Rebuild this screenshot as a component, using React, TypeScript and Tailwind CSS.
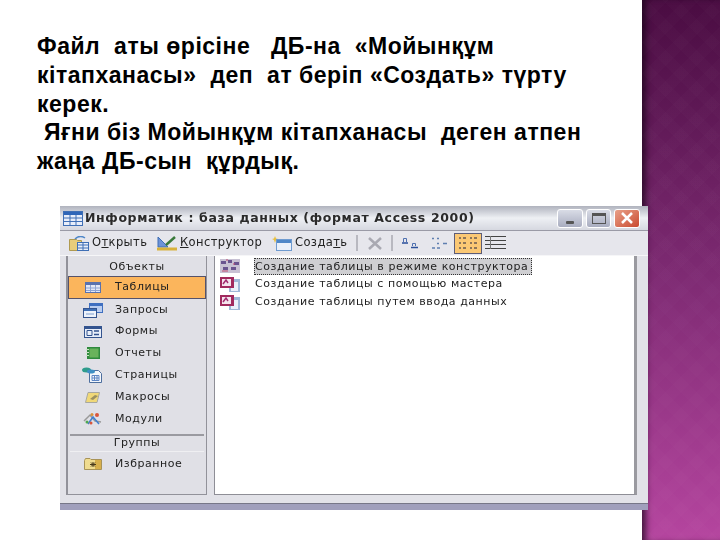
import React from "react";

const TableIcon = () => (
  <svg width="16" height="11" viewBox="0 0 16 11"><rect x="0" y="0" width="16" height="11" fill="#5a72ae" /><rect x="1" y="3" width="14" height="7" fill="#e4e8f6" /><path d="M1 6h14M1 8.500h14M5.500 3v7M10.500 3v7" stroke="#8ea4d4" /></svg>
);
const QueryIcon = () => (
  <svg width="20" height="15" viewBox="0 0 20 15"><rect x="6" y="0" width="14" height="10" fill="#3f6fc0" /><rect x="7" y="3" width="12" height="6" fill="#b9cdf0" /><rect x="0.500" y="5.500" width="13" height="9" fill="#eef3fb" stroke="#34548f" /><rect x="1" y="6" width="12" height="2" fill="#3f6fb5" /><path d="M3 11h8" stroke="#7f9fd0" /></svg>
);
const FormIcon = () => (
  <svg width="18" height="12" viewBox="0 0 18 12"><rect x="0" y="0" width="18" height="12" fill="#34548f" /><rect x="1" y="3" width="16" height="8" fill="#e8eef9" /><path d="M3 4.500h5v5H3z" fill="none" stroke="#34548f" /><path d="M10 5h5M10 8.500h5" stroke="#34548f" strokeWidth="1.500" /></svg>
);
const ReportIcon = () => (
  <svg width="14" height="12" viewBox="0 0 14 12"><rect x="1" y="0" width="13" height="12" fill="#2f8a3e" /><rect x="3.500" y="1.500" width="9" height="9" fill="#69b35c" /><path d="M0 2.500h3M0 5.500h3M0 8.500h3" stroke="#c9e4c4" /></svg>
);
const PageIcon = () => (
  <svg width="21" height="16" viewBox="0 0 21 16"><path d="M7.500 3.500h9l3 3v9h-12z" fill="#f4f7fc" stroke="#4e6f9e" /><path d="M10 8.500h7v5h-7zM10 11h7M12.500 8.500v5M15 8.500v5" fill="none" stroke="#5f86c4" /><ellipse cx="4.500" cy="3" rx="4.500" ry="2.500" fill="#2f9c8c" /><ellipse cx="9" cy="4.500" rx="4" ry="2" fill="#3f8fc4" /></svg>
);
const MacroIcon = () => (
  <svg width="15" height="11" viewBox="0 0 15 11"><path d="M3 0.500H14.500L12 10.500H0.500Z" fill="#f0d878" stroke="#a8a8a0" /><path d="M5 7l5-4 3 1-5 4z" fill="#9a9060" /></svg>
);
const ModuleIcon = () => (
  <svg width="20" height="14" viewBox="0 0 20 14"><path d="M1 9L7 3L12 9L18 10" fill="none" stroke="#999" strokeWidth="1.500" /><path d="M5 12L10 5L16 12" fill="none" stroke="#3f7fd0" strokeWidth="1.500" /><circle cx="14" cy="3" r="2" fill="#d8553c" /><circle cx="9" cy="2.500" r="1.500" fill="#d8923c" /><circle cx="4" cy="10" r="1.500" fill="#50a850" /><circle cx="8" cy="11" r="1.500" fill="#d8553c" /></svg>
);
const FolderIcon = () => (
  <svg width="18" height="12" viewBox="0 0 18 12"><path d="M0.500 2.500V11.500H17.500V1.500H7L6 0.500H1.500Z" fill="#f0dc90" stroke="#a89358" /><rect x="11" y="2" width="6" height="9" fill="#d8b04c" /><path d="M6 6.500h6M9 4v5M7 4.500l4 4M11 4.500l-4 4" stroke="#4a3a1a" /></svg>
);
const WizardIcon = ({ kind }: { kind: "design" | "wizard" }) =>
  kind === "design" ? (
    <svg width="20" height="14" viewBox="0 0 20 14"><rect width="20" height="14" fill="#c8c2d4" /><path d="M1 2h5v3H1zM8 1h4v3H8zM14 3h5v3h-5zM3 8h5v3H3zM11 8h5v3h-5z" fill="#6a5590" /><path d="M6 1h2M13 5h2M2 12h6" stroke="#c04a70" /></svg>
  ) : (
    <svg width="20" height="15" viewBox="0 0 20 15"><rect x="9" y="2" width="11" height="13" fill="#9fb8d8" /><rect x="11" y="5" width="7" height="9" fill="#eaf0fa" /><rect x="0" y="0" width="14" height="11" fill="#a12a5e" /><rect x="2" y="2" width="9" height="7" fill="#f4e4ee" /><path d="M3 7l3-4 2 3" fill="none" stroke="#a12a6e" strokeWidth="1.500" /></svg>
  );

const navItems: [string, React.ReactNode, string][] = [
  ["Запросы", <QueryIcon />, "h-[22px]"],
  ["Формы", <FormIcon />, "h-[21px]"],
  ["Отчеты", <ReportIcon />, "h-[22px]"],
  ["Страницы", <PageIcon />, "h-[22px]"],
  ["Макросы", <MacroIcon />, "h-[22px]"],
  ["Модули", <ModuleIcon />, "h-[22px]"],
];

const NavRow = ({ label, icon, h }: { label: string; icon: React.ReactNode; h: string }) => (
  <div className={`flex items-center ${h}`}>
    <div className="w-[47px] flex justify-center pl-[2px]">{icon}</div>
    <span>{label}</span>
  </div>
);

const Btn = ({ children, cls }: { children: React.ReactNode; cls: string }) => (
  <div className={`h-[19px] rounded-[3px] border border-white flex items-center justify-center ${cls}`}>{children}</div>
);

const Window = () => (
  <div className="absolute left-[60px] top-[206px] w-[588px] h-[304px] flex flex-col bg-[#e2e2e8] font-['DejaVu_Sans',sans-serif] text-[11px] tracking-[0.55px] text-[#222] blur-[0.35px] overflow-hidden">
    {/* title bar */}
    <div className="h-[24px] flex items-center bg-gradient-to-b from-[#b0b3be] via-[#eef0f4] to-[#d6d8e0] pl-[3px] pr-[8px] shrink-0">
      <svg width="20" height="15" viewBox="0 0 20 15" className="shrink-0"><rect x="0.500" y="0.500" width="19" height="14" fill="#e8eefa" stroke="#3f6fb5" /><rect x="1" y="1" width="18" height="3" fill="#2f66b8" /><path d="M1 7h18M1 10.500h18M7 4v10M13 4v10" stroke="#3f6fb5" /></svg>
      <span className="ml-[2px] font-bold text-[12.500px] text-[#2a2a2a] tracking-[0.63px] whitespace-pre">Информатик : база данных (формат Access 2000)</span>
      <div className="ml-auto flex gap-[3px]">
        <Btn cls="w-[26px] bg-gradient-to-b from-[#d9dce6] to-[#a9adc0] items-end pb-[3px]"><div className="w-[8px] h-[3px] bg-[#555] rounded-[1px]" /></Btn>
        <Btn cls="w-[25px] bg-gradient-to-b from-[#d9dce6] to-[#a9adc0]"><div className="w-[14px] h-[11px] border border-[#555] border-t-[3px]" /></Btn>
        <Btn cls="w-[26px] bg-gradient-to-br from-[#e8a088] to-[#c9482e]">
          <svg width="14" height="12" viewBox="0 0 14 12"><path d="M2 1l10 10M12 1L2 11" stroke="#fff" strokeWidth="2.500" /></svg>
        </Btn>
      </div>
    </div>
    {/* toolbar */}
    <div className="h-[25px] flex items-center pl-[9px] shrink-0 border-t border-[#9a9aa6] bg-[#e6e6ec] text-[11.500px] tracking-[0.4px]">
      <svg width="20" height="15" viewBox="0 0 20 15" className="shrink-0"><path d="M0.500 3.500h7l1 1h4v10H0.500z" fill="#e8cd7a" stroke="#b09a50" /><path d="M6 3C9 0 13 0 16 2" fill="none" stroke="#4f87c8" strokeWidth="1.500" /><rect x="8.500" y="6.500" width="11" height="8" fill="#eaf0fa" stroke="#3f6fb5" /><path d="M9 9h10M9 12h10M14 7v7" stroke="#3f6fb5" /></svg>
      <span className="ml-[3px] w-[65px]">О<u>т</u>крыть</span>
      <svg width="20" height="15" viewBox="0 0 20 15" className="shrink-0"><path d="M1 1l10 10H1z" fill="#6e93d8" stroke="#3f6fb5" /><rect x="0" y="11.500" width="20" height="3" fill="#d8b23c" /><path d="M9 9L18 1" stroke="#3a7a3a" strokeWidth="2.500" /></svg>
      <span className="ml-[3px] w-[92px]"><u>К</u>онструктор</span>
      <svg width="20" height="15" viewBox="0 0 20 15" className="shrink-0"><path d="M3 0l1 2.500L6.500 3 4 4 3 7 2 4 0 3l2-.5z" fill="#e8c040" /><rect x="4.500" y="3.500" width="15" height="11" fill="#eaf0fa" stroke="#6f9bd0" /><rect x="5" y="4" width="14" height="3" fill="#4f87c8" /></svg>
      <span className="ml-[3px] w-[61px]">Созда<u>т</u>ь</span>
      <div className="w-[2px] h-[16px] bg-[#b8b8c0]" />
      <svg width="16" height="13" viewBox="0 0 16 13" className="ml-[9px] shrink-0"><path d="M2 1l12 11M14 1L2 12" stroke="#a9a9b2" strokeWidth="2.500" /></svg>
      <div className="w-[2px] h-[16px] bg-[#b8b8c0] ml-[8px]" />
      <svg width="18" height="12" viewBox="0 0 18 12" className="ml-[8px] shrink-0"><path d="M2.500 5V1.500h3V5M11.500 9V6.500h3V9" fill="none" stroke="#4f70b0" /><path d="M1 6h6M10 10.500h7" stroke="#2a4f9a" strokeWidth="1.500" /></svg>
      <svg width="18" height="13" viewBox="0 0 18 13" className="ml-[12px] shrink-0"><path d="M1 1.500h2M6 1.500h2M6 6.500h2M12 6.500h4M1 11h3M6 11h3" stroke="#5f7fb0" strokeWidth="1.500" /></svg>
      <div className="ml-[5px] w-[28px] h-[21px] bg-[#fbc874] border border-[#5d5d78] flex items-center justify-center shrink-0">
        <svg width="20" height="14" viewBox="0 0 20 14"><path d="M1 2h2M5 2h3M12 2h2M16 2h3M1 7h2M5 7h3M12 7h2M16 7h3M1 12h2M5 12h3M12 12h2M16 12h3" stroke="#6a5a50" strokeWidth="1.500" /></svg>
      </div>
      <svg width="21" height="14" viewBox="0 0 21 14" className="ml-[3px] shrink-0"><path d="M0 0.500h21M0 4.500h21M0 8.500h21M0 12.500h21" stroke="#444" /><path d="M5.500 0v13" stroke="#777" /></svg>
    </div>
    {/* body */}
    <div className="h-[240px] flex pl-[6px] pr-[11px] gap-[7px] shrink-0 border-t border-[#f6f6f8]">
      <div className="w-[141px] h-full border border-t-0 border-l-2 border-[#92929a] bg-[#e0e0e6] flex flex-col pt-[2px]">
        <div className="h-[18px] flex items-center justify-center">Объекты</div>
        <div className="h-[23px] flex items-center bg-[#fbb55c] border border-[#55526a]">
          <div className="w-[46px] flex justify-center pl-[2px]"><TableIcon /></div>
          <span>Таблицы</span>
        </div>
        {navItems.map(([l, i, h]) => <NavRow key={l} label={l} icon={i} h={h} />)}
        <div className="mt-[4px] mx-[2px] h-[2px] bg-[#9a9aa0]" />
        <div className="h-[15px] flex items-center justify-center">Группы</div>
        <div className="mx-[2px] h-px bg-[#efeff2]" />
        <NavRow label="Избранное" icon={<FolderIcon />} h="h-[24px]" />
      </div>
      <div className="flex-1 h-full bg-white border-l border-b border-[#8e8e96] border-r-[3px] border-r-[#9a9aa0] pt-[1px] pl-[5px]">
        <div className="flex items-center h-[18px]">
          <div className="w-[34px] flex"><WizardIcon kind="design" /></div>
          <span className="bg-[#cfcfd2] border border-dotted border-[#333] h-[17px] leading-[15px] w-[278px] whitespace-nowrap">Создание таблицы в режиме конструктора</span>
        </div>
        <div className="flex items-center h-[18px] pt-[1px]">
          <div className="w-[35px] flex"><WizardIcon kind="wizard" /></div>
          <span>Создание таблицы с помощью мастера</span>
        </div>
        <div className="flex items-center h-[18px] pt-[1px]">
          <div className="w-[35px] flex"><WizardIcon kind="wizard" /></div>
          <span>Создание таблицы путем ввода данных</span>
        </div>
      </div>
    </div>
    <div className="mt-auto h-[7px] bg-[#a09fbc] border-t border-[#777788] shrink-0" />
  </div>
);

export default function App() {
  return (
    <div className="relative w-[720px] h-[540px] flex overflow-hidden bg-white">
      <main className="w-[642px] h-full bg-white pl-[37px] pt-[32px] font-['Liberation_Sans',sans-serif] font-bold text-[23px] tracking-[0.52px] leading-[28.800px] text-black whitespace-pre">
        <p>Файл  аты өрісіне   ДБ-на  «Мойынқұм</p>
        <p>кітапханасы»  деп  ат беріп «Создать» түрту</p>
        <p>керек.</p>
        <p> Яғни біз Мойынқұм кітапханасы  деген атпен</p>
        <p>жаңа ДБ-сын  құрдық.</p>
      </main>
      <aside className="relative w-[78px] h-full bg-gradient-to-b from-[#4a0c42] via-[#7d2a72] to-[#b5459f] shadow-[inset_7px_0_6px_-3px_rgba(20,0,20,0.7)]">
        <div className="absolute inset-0 bg-[repeating-linear-gradient(45deg,rgba(255,255,255,0.012)_0,rgba(255,255,255,0.012)_11px,transparent_11px,transparent_22px),repeating-linear-gradient(-45deg,rgba(255,255,255,0.012)_0,rgba(255,255,255,0.012)_11px,transparent_11px,transparent_22px)]" />
      </aside>
      <Window />
    </div>
  );
}
